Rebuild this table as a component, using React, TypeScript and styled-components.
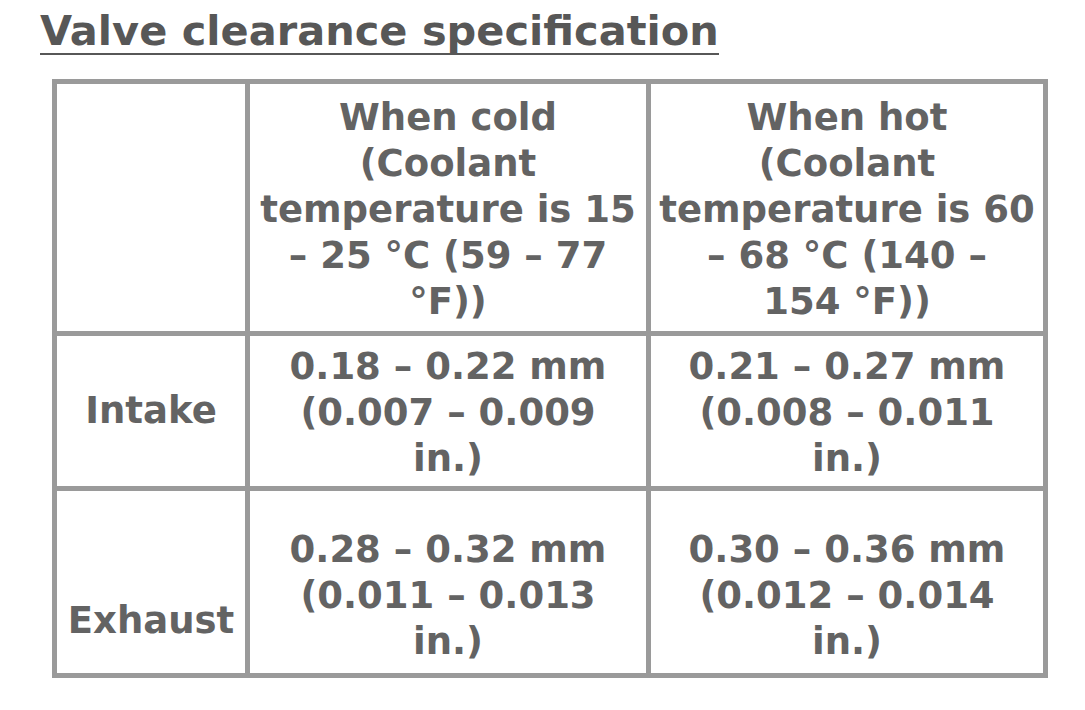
import React from "react";
import styled, { createGlobalStyle } from "styled-components";

const GlobalStyle = createGlobalStyle`
  html, body {
    margin: 0;
    padding: 0;
    background: #fff;
  }

  body {
    font-family: "DejaVu Sans", Verdana, sans-serif;
    font-weight: bold;
    color: #636363;
  }
`;

const Page = styled.div`
  width: 1085px;
  height: 710px;
  padding: 9px 0 0 40px;
  box-sizing: border-box;
`;

const Title = styled.h1`
  display: inline-block;
  margin: 0;
  font-size: 41.5px;
  line-height: 44px;
  font-weight: bold;
  color: #575757;
  border-bottom: 2px solid #575757;
`;

const SpecGrid = styled.div`
  display: grid;
  grid-template-columns: 188px 396px 392px;
  grid-template-rows: 247px 150px 182px;
  gap: 5px;
  padding: 5px;
  width: max-content;
  margin: 24px 0 0 12px;
  background: #9a9a9a;
`;

const Cell = styled.div<{ $align?: "center" | "end"; $padTop?: number; $padBottom?: number }>`
  display: flex;
  flex-direction: column;
  justify-content: ${(p) => (p.$align === "end" ? "flex-end" : "center")};
  align-items: center;
  padding: ${(p) => `${p.$padTop ?? 0}px 0 ${p.$padBottom ?? 0}px`};
  background: #fff;
  text-align: center;
  font-size: 37px;
  line-height: 46px;
  box-sizing: border-box;
`;

const COLUMNS = [
  {
    lines: ["When cold", "(Coolant", "temperature is 15", "– 25 °C (59 – 77", "°F))"],
  },
  {
    lines: ["When hot", "(Coolant", "temperature is 60", "– 68 °C (140 –", "154 °F))"],
  },
];

const ROWS = [
  {
    label: "Intake",
    labelAlign: "center" as const,
    values: [
      ["0.18 – 0.22 mm", "(0.007 – 0.009", "in.)"],
      ["0.21 – 0.27 mm", "(0.008 – 0.011", "in.)"],
    ],
    padTop: 4,
  },
  {
    label: "Exhaust",
    labelAlign: "end" as const,
    values: [
      ["0.28 – 0.32 mm", "(0.011 – 0.013", "in.)"],
      ["0.30 – 0.36 mm", "(0.012 – 0.014", "in.)"],
    ],
    padTop: 28,
  },
];

const Lines = ({ lines }: { lines: string[] }) => (
  <>
    {lines.map((line, i) => (
      <span key={i}>{line}</span>
    ))}
  </>
);

const App = () => {
  return (
    <Page>
      <GlobalStyle />
      <Title>Valve clearance specification</Title>

      <SpecGrid>
        <Cell />
        {COLUMNS.map((col, i) => (
          <Cell key={i} $padTop={4}>
            <Lines lines={col.lines} />
          </Cell>
        ))}

        {ROWS.map((row) => (
          <React.Fragment key={row.label}>
            <Cell $align={row.labelAlign} $padBottom={row.labelAlign === "end" ? 29 : 0}>
              {row.label}
            </Cell>
            {row.values.map((v, i) => (
              <Cell key={i} $padTop={row.padTop}>
                <Lines lines={v} />
              </Cell>
            ))}
          </React.Fragment>
        ))}
      </SpecGrid>
    </Page>
  );
};

export default App;
